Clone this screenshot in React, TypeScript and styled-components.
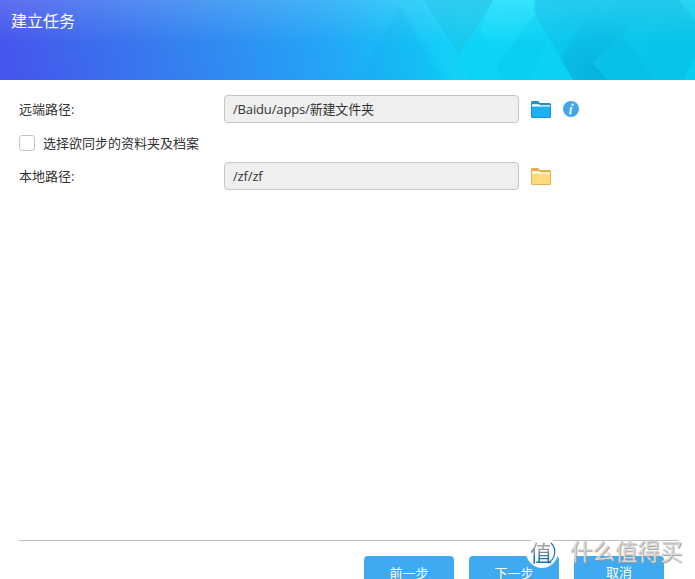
import React, {FC} from 'react';
import styled, {createGlobalStyle} from 'styled-components';

const FONT = `"Open Sans", "Noto Sans CJK SC", sans-serif`;

const GlobalStyle = createGlobalStyle`
  html, body {
    margin: 0;
    padding: 0;
    background: #fff;
    overflow: hidden;
  }
`;

const HeaderFacets: FC = () => (
    <FacetSvg viewBox="0 0 695 80" width="695" height="80">
        <defs>
            <linearGradient id="bright" x1="0" y1="0" x2="0" y2="1">
                <stop offset="0" stopColor="#3cecff" stopOpacity=".6"/>
                <stop offset="1" stopColor="#12d8fa" stopOpacity=".08"/>
            </linearGradient>
            <radialGradient id="deep" cx=".35" cy=".9" r=".7">
                <stop offset="0" stopColor="#0595c8" stopOpacity=".4"/>
                <stop offset="1" stopColor="#0a9ed0" stopOpacity=".04"/>
            </radialGradient>
        </defs>
        <polygon points="399,6 357,80 443,80" fill="#1093dc" opacity=".09"/>
        <polygon points="372,0 424,0 459,55 470,80 452,80 399,6" fill="#6fe4ff" opacity=".06"/>
        <polygon points="424,0 493,0 459,55" fill="#2eb4d8" opacity=".3"/>
        <polygon points="493,0 533,0 537,12 497,63 480,30" fill="url(#bright)"/>
        <polygon points="537,0 593,0 560,57 533,10" fill="#0ea6d6" opacity=".22"/>
        <polygon points="520,37 547,42 530,80 500,80 497,63" fill="#0aa8d6" opacity=".1"/>
        <polygon points="593,0 680,0 695,22 695,58 683,80 573,80 560,57" fill="#0ba2d2" opacity=".2"/>
        <polygon points="605,15 620,0 665,0 622,35 593,63 607,80 573,80 560,57 593,3" fill="url(#deep)"/>
        <polygon points="622,35 640,58 652,80 607,80 593,63" fill="#0590c4" opacity=".08"/>
    </FacetSvg>
);

const FolderIcon: FC<{back: string; front: string}> = ({back, front}) => (
    <svg width="20" height="17" viewBox="0 0 20 17">
        <path d="M0 1.5 Q0 0 1.5 0 H7 L9 2 H18.5 Q20 2 20 3.5 V15.5 Q20 17 18.5 17 H1.5 Q0 17 0 15.5Z" fill={back}/>
        <path d="M1 3.2 H8 L9 4.2 H19 V6 H1Z" fill="#fff"/>
        <path d="M1 5.5 H19 V15 Q19 16 18 16 H2 Q1 16 1 15Z" fill={front}/>
    </svg>
);

const InfoIcon: FC = () => (
    <svg width="16" height="16" viewBox="0 0 16 16">
        <circle cx="8" cy="8" r="8" fill="#42a5f0"/>
        <circle cx="9.6" cy="3.8" r="1.3" fill="#e4f1fc"/>
        <path d="M7.4 6 H9.6 L8.1 12 Q8 12.6 9 12 L9.1 12.6 Q7.6 13.8 6.5 13.4 Q5.9 13.1 6.1 12.3 L7.2 7 L6.5 6.8Z" fill="#e4f1fc"/>
    </svg>
);

const WatermarkBadge: FC = () => (
    <svg width="32" height="32" viewBox="0 0 32 32">
        <circle cx="16" cy="16" r="16" fill="#fff" opacity=".95"/>
        <path d="M22 27 A12.5 12.5 0 0 0 25 7" fill="none" stroke="#1c6fa8" strokeWidth="1.2"/>
    </svg>
);

export default function App() {
    return (
        <Page>
            <GlobalStyle/>
            <Header>
                <HeaderFacets/>
                <Title>建立任务</Title>
            </Header>
            <Body>
                <Row>
                    <FieldLabel>远端路径:</FieldLabel>
                    <PathBox>/Baidu/apps/新建文件夹</PathBox>
                    <FolderSlot><FolderIcon back="#1f8fd0" front="#1ab2f2"/></FolderSlot>
                    <InfoSlot><InfoIcon/></InfoSlot>
                </Row>
                <CheckRow>
                    <CheckBox/>
                    <CheckText>选择欲同步的资料夹及档案</CheckText>
                </CheckRow>
                <Row>
                    <FieldLabel>本地路径:</FieldLabel>
                    <PathBox>/zf/zf</PathBox>
                    <FolderSlot><FolderIcon back="#e0b050" front="#ffdb7a"/></FolderSlot>
                </Row>
            </Body>
            <Footer>
                <Divider/>
                <Buttons>
                    <ActionButton $lower>前一步</ActionButton>
                    <ActionButton $lower>下一步</ActionButton>
                    <ActionButton>取消</ActionButton>
                </Buttons>
            </Footer>
            <Watermark>
                <BadgeWrap>
                    <WatermarkBadge/>
                    <BadgeChar>值</BadgeChar>
                </BadgeWrap>
                <WatermarkText>什么值得买</WatermarkText>
            </Watermark>
        </Page>
    );
}

const Page = styled.div`
  position: relative;
  width: 695px;
  height: 579px;
  overflow: hidden;
  display: flex;
  flex-direction: column;
  background: #fff;
  font-family: ${FONT};
  color: #333;
`;

const Header = styled.div`
  position: relative;
  height: 80px;
  flex-shrink: 0;
  padding: 11px 0 0 11px;
  box-sizing: border-box;
  background:
    linear-gradient(180deg, rgba(255, 255, 255, .14) 0%, rgba(255, 255, 255, 0) 55%),
    linear-gradient(78deg, #4653ec 0%, #3384f0 28%, #22a8f7 48%, #0cd4f8 66%, #08cdf0 100%);
`;

const FacetSvg = styled.svg`
  position: absolute;
  top: 0;
  left: 0;
`;

const Title = styled.div`
  position: relative;
  font-size: 16px;
  line-height: 20px;
  color: #fff;
`;

const Body = styled.div`
  flex: 1;
  display: flex;
  flex-direction: column;
  padding: 15px 0 0 19px;
`;

const Row = styled.div`
  display: flex;
  align-items: center;
  height: 28px;
`;

const FieldLabel = styled.div`
  width: 205px;
  padding-bottom: 2px;
  font-size: 13px;
`;

const PathBox = styled.div`
  width: 295px;
  height: 28px;
  box-sizing: border-box;
  padding-left: 8px;
  border: 1px solid #c4c4c4;
  border-radius: 4px;
  background: #efefef;
  font-size: 13px;
  line-height: 27px;
  letter-spacing: -0.15px;
  color: #333;
`;

const FolderSlot = styled.div`
  display: flex;
  margin-left: 12px;
`;

const InfoSlot = styled.div`
  display: flex;
  margin-left: 12px;
`;

const CheckRow = styled.div`
  display: flex;
  align-items: center;
  height: 39px;
`;

const CheckBox = styled.div`
  width: 16px;
  height: 16px;
  box-sizing: border-box;
  border: 1px solid #c4c4c4;
  border-radius: 3px;
  background: #fff;
`;

const CheckText = styled.div`
  margin-left: 8px;
  font-size: 13px;
`;

const Footer = styled.div`
  height: 39px;
  flex-shrink: 0;
  padding: 0 16px 0 19px;
`;

const Divider = styled.div`
  height: 1px;
  background: #bdbac4;
`;

const Buttons = styled.div`
  display: flex;
  justify-content: flex-end;
  gap: 15px;
  padding: 15px 15px 0 0;
`;

const ActionButton = styled.div<{$lower?: boolean}>`
  width: 90px;
  height: 30px;
  box-sizing: border-box;
  padding-top: ${({$lower}) => ($lower ? 9 : 8)}px;
  border-radius: 4px 4px 0 0;
  background: #3fa9f2;
  color: #fff;
  font-size: 13px;
  line-height: 16px;
  text-align: center;
`;

const Watermark = styled.div`
  position: absolute;
  left: 526px;
  top: 536px;
  display: flex;
  align-items: center;
  gap: 12px;
`;

const BadgeWrap = styled.div`
  position: relative;
  width: 32px;
  height: 32px;
`;

const BadgeChar = styled.div`
  position: absolute;
  left: 4px;
  top: 2px;
  font-size: 22px;
  line-height: 28px;
  background: linear-gradient(180deg, #a0a0a0 35%, #1c6fa8 75%);
  -webkit-background-clip: text;
  background-clip: text;
  color: transparent;
`;

const WatermarkText = styled.div`
  font-size: 22.5px;
  line-height: 28px;
  color: #d8d8d8;
  text-shadow: 1px 1px 1px #9a9a9a;
`;
